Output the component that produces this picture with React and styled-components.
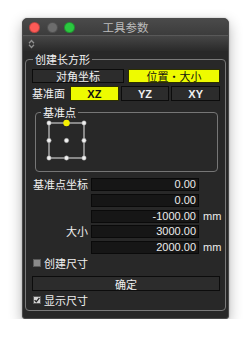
import React from 'react'
import styled, { createGlobalStyle } from 'styled-components'

const GlobalStyle = createGlobalStyle`
  html, body { margin:0; padding:0; background:#fff; }
  body { font-family:"Noto Sans CJK SC", "Liberation Sans", sans-serif; }
`

const Page = styled.div`
  padding:18px 0 0 22px;
`

const Window = styled.div`
  width:207px;
  box-sizing:border-box;
  border:1px solid #4a4a4a;
  border-radius:5px 5px 3px 3px;
  background:#282828;
  box-shadow:0 5px 14px rgba(0,0,0,.3), 0 0 2px rgba(0,0,0,.25);
  overflow:hidden;
`

const TitleBar = styled.div`
  height:16px;
  display:grid;
  grid-template-columns:1fr auto 1fr;
  align-items:center;
  padding:0 6px;
  background:linear-gradient(#4a4a4a, #3c3c3c);
`

const Lights = styled.div`
  display:flex;
  gap:6.5px;
`

const Light = styled.span`
  width:11px;
  height:11px;
  border-radius:50%;
  box-sizing:border-box;
  background:${p => p.color};
  border:0.5px solid rgba(0,0,0,.25);
`

const Title = styled.div`
  font-size:11.5px;
  line-height:14px;
  color:#bcbcbc;
`

const Toolbar = styled.div`
  height:15px;
  display:flex;
  align-items:center;
  padding-left:5px;
  border-top:1px solid #585858;
  background:linear-gradient(#464646, #2a2a2a);
`

const Body = styled.div`
  padding:1px 2px 7px 2px;
`

const Group = styled.fieldset`
  margin:0;
  min-width:0;
  padding:3px 5px 3px 6px;
  border:1px solid #7a7a7a;
  border-radius:4px;
  display:flex;
  flex-direction:column;
`

const Legend = styled.legend`
  margin-left:${p => p.$offset}px;
  padding:0 2px;
  font-size:11px;
  line-height:14px;
  color:#f2f2f2;
`

const InnerGroup = styled.fieldset`
  margin:4px 2px 0 3px;
  min-width:0;
  padding:0 0 7px 0;
  border:1px solid #767676;
  border-radius:4px;
`

const ButtonRow = styled.div`
  display:grid;
  grid-template-columns:1fr 1fr;
  column-gap:4px;
`

const PlaneRow = styled.div`
  margin-top:3px;
  display:grid;
  grid-template-columns:36px repeat(3, 1fr);
  column-gap:2px;
  align-items:center;
`

const Button = styled.div`
  height:${p => p.$h || 14}px;
  box-sizing:border-box;
  display:flex;
  align-items:center;
  justify-content:center;
  border:1px solid ${p => (p.$active ? '#2d2f00' : '#0c0c0c')};
  background:${p => (p.$active ? '#eefb00' : '#2c2c2c')};
  color:${p => (p.$active ? '#111' : '#f0f0f0')};
  font-size:11px;
  line-height:12px;
  font-family:${p => (p.$latin ? '"Liberation Sans", sans-serif' : 'inherit')};
  font-weight:${p => (p.$latin ? 700 : 400)};
`

const Label = styled.div`
  font-size:11px;
  line-height:13px;
  color:#f0f0f0;
  text-align:${p => p.$align || 'left'};
`

const Coords = styled.div`
  margin-top:6px;
  display:grid;
  grid-template-columns:56px 108px 1fr;
  grid-auto-rows:13px;
  column-gap:3px;
  row-gap:2.75px;
`

const Field = styled.div`
  box-sizing:border-box;
  height:13px;
  border:1px solid #0a0a0a;
  background:#161616;
  padding-right:2px;
  text-align:right;
  font-family:"Liberation Sans", sans-serif;
  font-size:11px;
  line-height:11px;
  color:#ececec;
`

const Unit = styled.div`
  padding-left:1px;
  font-family:"Liberation Sans", sans-serif;
  font-size:11px;
  line-height:13px;
  color:#ececec;
`

const CheckRow = styled.div`
  margin-top:2px;
  height:14px;
  display:flex;
  align-items:center;
  gap:3px;
  padding-left:1px;
`

const Box = styled.span`
  width:8px;
  height:8px;
  box-sizing:border-box;
  border:1px solid #5a5a5a;
  background:${p => (p.$checked ? '#d6d6d6' : '#8a8a8a')};
  display:flex;
  align-items:center;
  justify-content:center;
`

const Confirm = styled(Button)`
  margin-top:6px;
`

function Check({ checked, children }) {
  return (
    <CheckRow>
      <Box $checked={checked}>
        {checked && (
          <svg width="6" height="6" viewBox="0 0 6 6">
            <path d="M0.6 3.1 L2.3 4.8 L5.4 0.8" fill="none" stroke="#222" strokeWidth="1.3" />
          </svg>
        )}
      </Box>
      <Label>{children}</Label>
    </CheckRow>
  )
}

function PointGrid() {
  const xs = [5, 22.5, 40]
  const ys = [4, 21.5, 39]
  return (
    <svg width="45" height="45" style={{ display: 'block', marginLeft: 8 }}>
      <rect x="5" y="4" width="35" height="35" fill="none" stroke="#e8e8e8" strokeWidth="1" />
      {ys.map((y, r) =>
        xs.map((x, c) =>
          r === 0 && c === 1 ? (
            <circle key={`${r}${c}`} cx={x} cy={y} r="3.2" fill="#f5f000" />
          ) : (
            <circle key={`${r}${c}`} cx={x} cy={y} r="2.2" fill="#f0f0f0" stroke="#9a9a9a" strokeWidth="0.5" />
          )
        )
      )}
    </svg>
  )
}

export default function App() {
  const rows = [
    ['基准点坐标', '0.00', ''],
    ['', '0.00', ''],
    ['', '-1000.00', 'mm'],
    ['大小', '3000.00', ''],
    ['', '2000.00', 'mm'],
  ]
  return (
    <Page>
      <GlobalStyle />
      <Window>
        <TitleBar>
          <Lights>
            <Light color="#fc5b57" />
            <Light color="#6c6c6c" />
            <Light color="#2bc840" />
          </Lights>
          <Title>工具参数</Title>
          <span />
        </TitleBar>
        <Toolbar>
          <svg width="7" height="10" viewBox="0 0 7 10">
            <path d="M1 4.2 L3.5 1.5 L6 4.2 M1 5.8 L3.5 8.5 L6 5.8" fill="none" stroke="#8e8e8e" strokeWidth="1.3" />
          </svg>
        </Toolbar>
        <Body>
          <Group>
            <Legend $offset={1}>创建长方形</Legend>
            <ButtonRow>
              <Button>对角坐标</Button>
              <Button $active>位置・大小</Button>
            </ButtonRow>
            <PlaneRow>
              <Label>基准面</Label>
              <Button $h={15} $latin $active>XZ</Button>
              <Button $h={15} $latin>YZ</Button>
              <Button $h={15} $latin>XY</Button>
            </PlaneRow>
            <InnerGroup>
              <Legend $offset={5}>基准点</Legend>
              <PointGrid />
            </InnerGroup>
            <Coords>
              {rows.map(([label, value, unit], i) => (
                <React.Fragment key={i}>
                  <Label $align="right">{label}</Label>
                  <Field>{value}</Field>
                  <Unit>{unit}</Unit>
                </React.Fragment>
              ))}
            </Coords>
            <Check>创建尺寸</Check>
            <Confirm $h={15}>确定</Confirm>
            <Check checked>显示尺寸</Check>
          </Group>
        </Body>
      </Window>
    </Page>
  )
}
